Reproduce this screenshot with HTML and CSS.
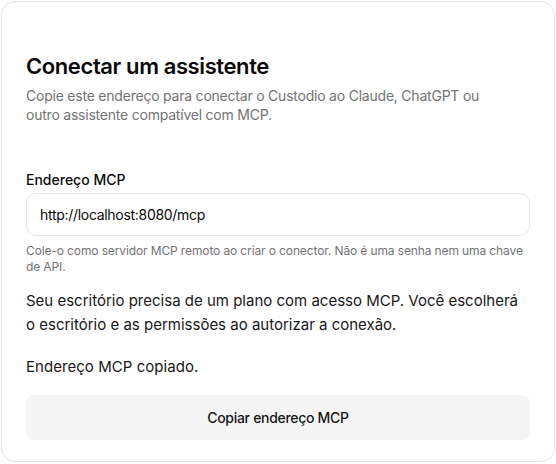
FILE: index.html
```html
<!DOCTYPE html>
<html lang="pt-BR">
<head>
<meta charset="utf-8">
<title>Conectar um assistente</title>
<link rel="stylesheet" href="styles.css">
</head>
<body>
<section class="card">
  <h1 class="title">Conectar um assistente</h1>
  <p class="subtitle">Copie este endereço para conectar o Custodio ao Claude, ChatGPT ou outro assistente compatível com MCP.</p>

  <label class="label" for="mcp-url">Endereço MCP</label>
  <input class="field" id="mcp-url" type="text" value="http://localhost:8080/mcp" readonly>
  <p class="help">Cole-o como servidor MCP remoto ao criar o conector. Não é uma senha nem uma chave de API.</p>

  <p class="body-text">Seu escritório precisa de um plano com acesso MCP. Você escolherá o escritório e as permissões ao autorizar a conexão.</p>
  <p class="status">Endereço MCP copiado.</p>

  <button class="copy-btn" type="button">Copiar endereço MCP</button>
</section>
</body>
</html>
```

FILE: styles.css
```css
* { box-sizing: border-box; }

html, body {
  margin: 0;
  padding: 0;
  background: #ffffff;
}

body {
  font-family: Inter, "Noto Sans", "Liberation Sans", sans-serif;
  color: #0a0a0a;
}

.card {
  margin: 1px;
  width: 554px;
  height: 461px;
  border: 1px solid #e5e5e5;
  border-radius: 14px;
  padding: 50px 24px 21px;
  display: flex;
  flex-direction: column;
  background: #ffffff;
}

.title {
  margin: 0;
  font-size: 22px;
  line-height: 28px;
  font-weight: 600;
  letter-spacing: -0.4px;
  color: #0a0a0a;
}

.subtitle {
  margin: 6px 0 0;
  max-width: 480px;
  font-size: 14px;
  line-height: 19px;
  letter-spacing: -0.22px;
  color: #737373;
}

.label {
  margin-top: 46px;
  font-size: 14px;
  line-height: 20px;
  font-weight: 500;
  color: #0a0a0a;
}

.field {
  margin-top: 3px;
  height: 43px;
  width: 100%;
  border: 1px solid #e5e5e5;
  border-radius: 10px;
  padding: 0 12px 0 13px;
  font-family: inherit;
  font-size: 14px;
  letter-spacing: -0.3px;
  color: #0a0a0a;
  background: #ffffff;
  outline: none;
}

.help {
  margin: 7px 0 0;
  font-size: 12px;
  line-height: 16px;
  letter-spacing: -0.12px;
  color: #737373;
}

.body-text {
  margin: 14px 0 0;
  font-size: 15px;
  line-height: 24px;
  letter-spacing: 0;
  color: #171717;
}

.status {
  margin: 18px 0 0;
  font-size: 15px;
  line-height: 24px;
  letter-spacing: 0.05px;
  color: #171717;
}

.copy-btn {
  margin-top: 16px;
  height: 45px;
  width: 100%;
  border: none;
  border-radius: 8px;
  background: #f5f5f5;
  font-family: inherit;
  font-size: 14px;
  font-weight: 500;
  letter-spacing: -0.3px;
  color: #171717;
}
```
